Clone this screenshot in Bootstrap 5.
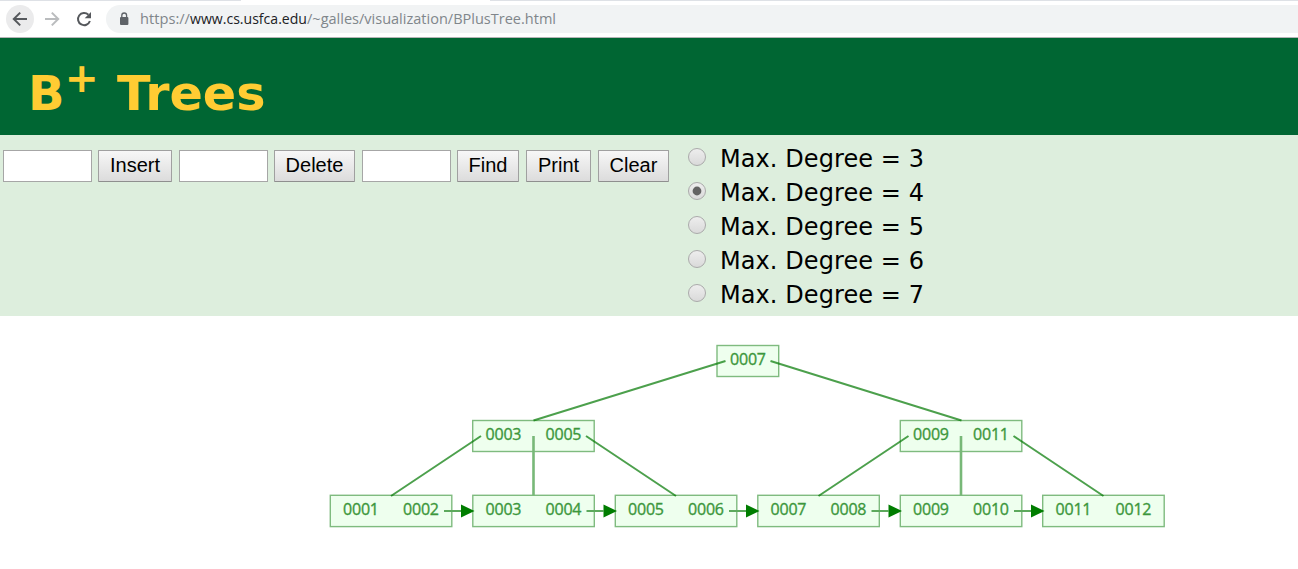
<!DOCTYPE html>
<html lang="en">
<head>
<meta charset="utf-8">
<title>B+ Trees</title>
<link href="https://cdn.jsdelivr.net/npm/bootstrap@5.3.0/dist/css/bootstrap.min.css" rel="stylesheet">
<style>
body{width:1298px;height:569px;overflow:hidden;background:#fff;color:#000}
.tabstrip{height:1px;background:#dee1e6}
.tabstrip span{width:249px;height:1px;margin-left:241px;background:#fff}
.toolbar{height:37px;padding:4px 0 4px 6px;border-bottom:1px solid #b6b4b6}
.nav-icon{width:28px;height:28px;margin-right:4px}
.nav-icon.active{background:#ebebec}
.address{height:28px;margin-left:4px;padding-left:11px;background:#f1f3f4;border-radius:14px 0 0 14px}
.url{font:14.6px/28px "Open Sans","Noto Sans",sans-serif;color:#80868b}
.heading{height:97px;background:#063;padding-left:28px}
.heading svg text{font-family:"DejaVu Sans",sans-serif;font-weight:700;fill:#fc3}
.controls{height:181px;background:#ddeedd;padding:15px 0 0 3px}
.field{width:89px;height:32px;border:1px solid #a6a6a6;background:#fff;border-radius:0;padding:0}
.action{height:32px;border:1px solid #a0a0a0;border-bottom-color:#8f8f8f;border-radius:1px;padding:0 0 2px;background:linear-gradient(#f7f7f7,#dcdcdc);font:20px/28px "Liberation Sans",sans-serif;color:#000}
.degrees{margin:-9px 0 0 19px}
.degree{height:34px}
.degree svg text{font:24px "DejaVu Sans",sans-serif}
.tree{font:16px "Open Sans","Noto Sans",sans-serif}
</style>
<script src="https://cdn.jsdelivr.net/npm/bootstrap@5.3.0/dist/js/bootstrap.bundle.min.js"></script>
</head>
<body>
<div class="tabstrip d-flex"><span></span></div>
<div class="toolbar d-flex">
  <div class="nav-icon active rounded-circle"><svg class="d-block" width="28" height="28" fill="none" stroke="#55585c" stroke-width="2"><path d="M21 14H8.500M14.200 7.600 7.800 14l6.400 6.400"/></svg></div>
  <div class="nav-icon"><svg class="d-block" width="28" height="28" fill="none" stroke="#babcbe" stroke-width="2"><path d="M7 14h12.500M13.800 7.600l6.400 6.400-6.400 6.400"/></svg></div>
  <div class="nav-icon"><svg class="d-block" width="28" height="28"><path d="M18.400 9.700A6.100 6.100 0 1 0 19.900 16" fill="none" stroke="#55585c" stroke-width="2"/><path d="M21 7v6.300h-6.300z" fill="#55585c"/></svg></div>
  <div class="address flex-grow-1 d-flex">
    <svg width="14" height="28"><rect x="3" y="12" width="8.400" height="8" rx="1" fill="#5f6368"/><path d="M4.800 12.400v-2a2.400 2.400 0 0 1 4.800 0v2" fill="none" stroke="#5f6368" stroke-width="1.300"/></svg>
    <svg class="url" width="430" height="28" fill="currentColor"><text x="9" y="19" textLength="50" lengthAdjust="spacingAndGlyphs">https://</text><text x="59" y="19" fill="#202124" textLength="117" lengthAdjust="spacingAndGlyphs">www.cs.usfca.edu</text><text x="176" y="19" textLength="249" lengthAdjust="spacingAndGlyphs">/~galles/visualization/BPlusTree.html</text></svg>
  </div>
</div>
<header class="heading"><svg class="d-block" width="260" height="97"><text x="0" y="72" font-size="48" textLength="36.500" lengthAdjust="spacingAndGlyphs">B</text><text x="36.800" y="54" font-size="40" textLength="34" lengthAdjust="spacingAndGlyphs">+</text><text x="89" y="72" font-size="48" textLength="148.500" lengthAdjust="spacingAndGlyphs">Trees</text></svg></header>
<main class="controls d-flex align-items-start">
  <input class="field"><button class="action" style="width:74px;margin-left:6px">Insert</button>
  <input class="field" style="margin-left:7px"><button class="action" style="width:81px;margin-left:6px">Delete</button>
  <input class="field" style="margin-left:7px"><button class="action" style="width:62px;margin-left:6px">Find</button>
  <button class="action" style="width:65px;margin-left:7px">Print</button>
  <button class="action" style="width:71px;margin-left:7px">Clear</button>
  <div class="degrees">
    <svg width="0" height="0" class="position-absolute"><defs><linearGradient id="knob" x2="0" y2="1"><stop stop-color="#eee"/><stop offset="1" stop-color="#d9d9d9"/></linearGradient></defs></svg>
    <div class="degree"><svg class="d-block" width="250" height="34"><circle cx="9" cy="16" r="8.500" fill="url(#knob)" stroke="#aaa"/><text x="32" y="25.500" textLength="204">Max. Degree = 3</text></svg></div>
    <div class="degree"><svg class="d-block" width="250" height="34"><circle cx="9" cy="16" r="8.500" fill="url(#knob)" stroke="#aaa"/><circle cx="9" cy="16" r="4.400" fill="#636363"/><text x="32" y="25.500" textLength="204">Max. Degree = 4</text></svg></div>
    <div class="degree"><svg class="d-block" width="250" height="34"><circle cx="9" cy="16" r="8.500" fill="url(#knob)" stroke="#aaa"/><text x="32" y="25.500" textLength="204">Max. Degree = 5</text></svg></div>
    <div class="degree"><svg class="d-block" width="250" height="34"><circle cx="9" cy="16" r="8.500" fill="url(#knob)" stroke="#aaa"/><text x="32" y="25.500" textLength="204">Max. Degree = 6</text></svg></div>
    <div class="degree"><svg class="d-block" width="250" height="34"><circle cx="9" cy="16" r="8.500" fill="url(#knob)" stroke="#aaa"/><text x="32" y="25.500" textLength="204">Max. Degree = 7</text></svg></div>
  </div>
</main>
<svg class="tree d-block" width="1298" height="253" viewBox="0 316 1298 253">
  <g fill="#eeffee" stroke="#7fbb7f" stroke-width="1.400">
    <rect x="717" y="345.500" width="61.700" height="31"/>
    <rect x="472.700" y="420.500" width="121.500" height="31"/><rect x="900.300" y="420.500" width="121.500" height="31"/>
    <rect x="330.300" y="495.300" width="121.500" height="31.300"/><rect x="472.800" y="495.300" width="121.500" height="31.300"/><rect x="615.300" y="495.300" width="121.500" height="31.300"/><rect x="757.800" y="495.300" width="121.500" height="31.300"/><rect x="900.300" y="495.300" width="121.500" height="31.300"/><rect x="1042.700" y="495.300" width="121.500" height="31.300"/>
  </g>
  <g stroke="#007700" stroke-opacity=".7" stroke-width="2" fill="none">
    <path d="M725.500 361 533.500 420.500M770.500 361l191 59.500M481 436l-90 60M586 436l90 60M908.500 436l-90 60M1013.500 436l90 60"/>
  </g>
  <path d="M533.500 436v59.500M961 436v59.500" stroke="#78b878" stroke-width="2.600"/>
  <path d="M444 511h17M586.500 511h17M729 511h17M871.500 511h17M1014 511h17" stroke="#5da95d" stroke-width="2"/>
  <path d="M461 504.500v13l13.500-6.500zM603.500 504.500v13l13.500-6.500zM746 504.500v13l13.500-6.500zM888.500 504.500v13l13.500-6.500zM1031 504.500v13l13.500-6.500z" fill="#007d00"/>
  <g fill="#3c973c" stroke="#3c973c" stroke-width=".35" text-anchor="middle">
    <text x="748" y="365" textLength="36">0007</text>
    <text x="503.500" y="440" textLength="36">0003</text><text x="563.500" y="440" textLength="36">0005</text>
    <text x="931" y="440" textLength="36">0009</text><text x="991" y="440" textLength="36">0011</text>
    <text x="361" y="515" textLength="36">0001</text><text x="421" y="515" textLength="36">0002</text>
    <text x="503.500" y="515" textLength="36">0003</text><text x="563.500" y="515" textLength="36">0004</text>
    <text x="646" y="515" textLength="36">0005</text><text x="706" y="515" textLength="36">0006</text>
    <text x="788.500" y="515" textLength="36">0007</text><text x="848.500" y="515" textLength="36">0008</text>
    <text x="931" y="515" textLength="36">0009</text><text x="991" y="515" textLength="36">0010</text>
    <text x="1073.500" y="515" textLength="36">0011</text><text x="1133.500" y="515" textLength="36">0012</text>
  </g>
</svg>
</body>
</html>
